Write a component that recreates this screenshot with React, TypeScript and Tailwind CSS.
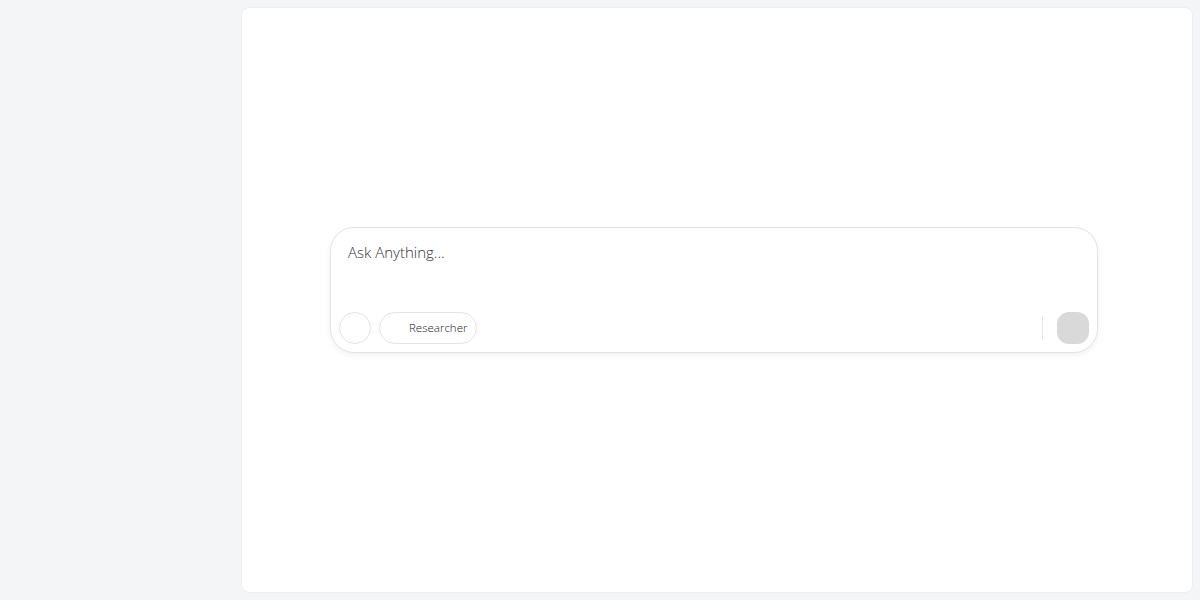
export default function App() {
  return (
    <div
      className="flex h-[600px] w-full bg-[#f4f5f7]"
      style={{ fontFamily: '"Open Sans", "Noto Sans", sans-serif' }}
    >
      <aside className="w-[233px] shrink-0" />
      <main className="my-[7px] ml-[8px] mr-[7px] flex flex-1 flex-col items-center rounded-lg border border-[#eceef1] bg-white">
        <div className="flex flex-1 w-full items-center justify-center pb-[20px] pr-[6px]">
          <div className="flex h-[126px] w-[768px] flex-col rounded-3xl border border-[#e3e3e3] bg-white shadow-[0_2px_6px_rgba(0,0,0,0.06)]">
            <div className="px-[17px] pt-[13px] text-[15px] font-light text-[#333]">
              Ask Anything...
            </div>
            <div className="mt-auto flex items-center gap-2 pl-[8px] pr-[8px] pb-[8px]">
              <button className="h-8 w-8 rounded-full border border-[#e3e3e3] bg-white" />
              <button className="flex h-8 w-[98px] items-center rounded-full border border-[#e3e3e3] bg-white pl-[29px] text-[11.5px] font-light text-[#222]">
                Researcher
              </button>
              <div className="ml-auto h-6 w-px bg-[#e3e3e3]" />
              <button className="ml-[6px] h-8 w-8 rounded-xl bg-[#d9d9d9]" />
            </div>
          </div>
        </div>
      </main>
    </div>
  );
}
